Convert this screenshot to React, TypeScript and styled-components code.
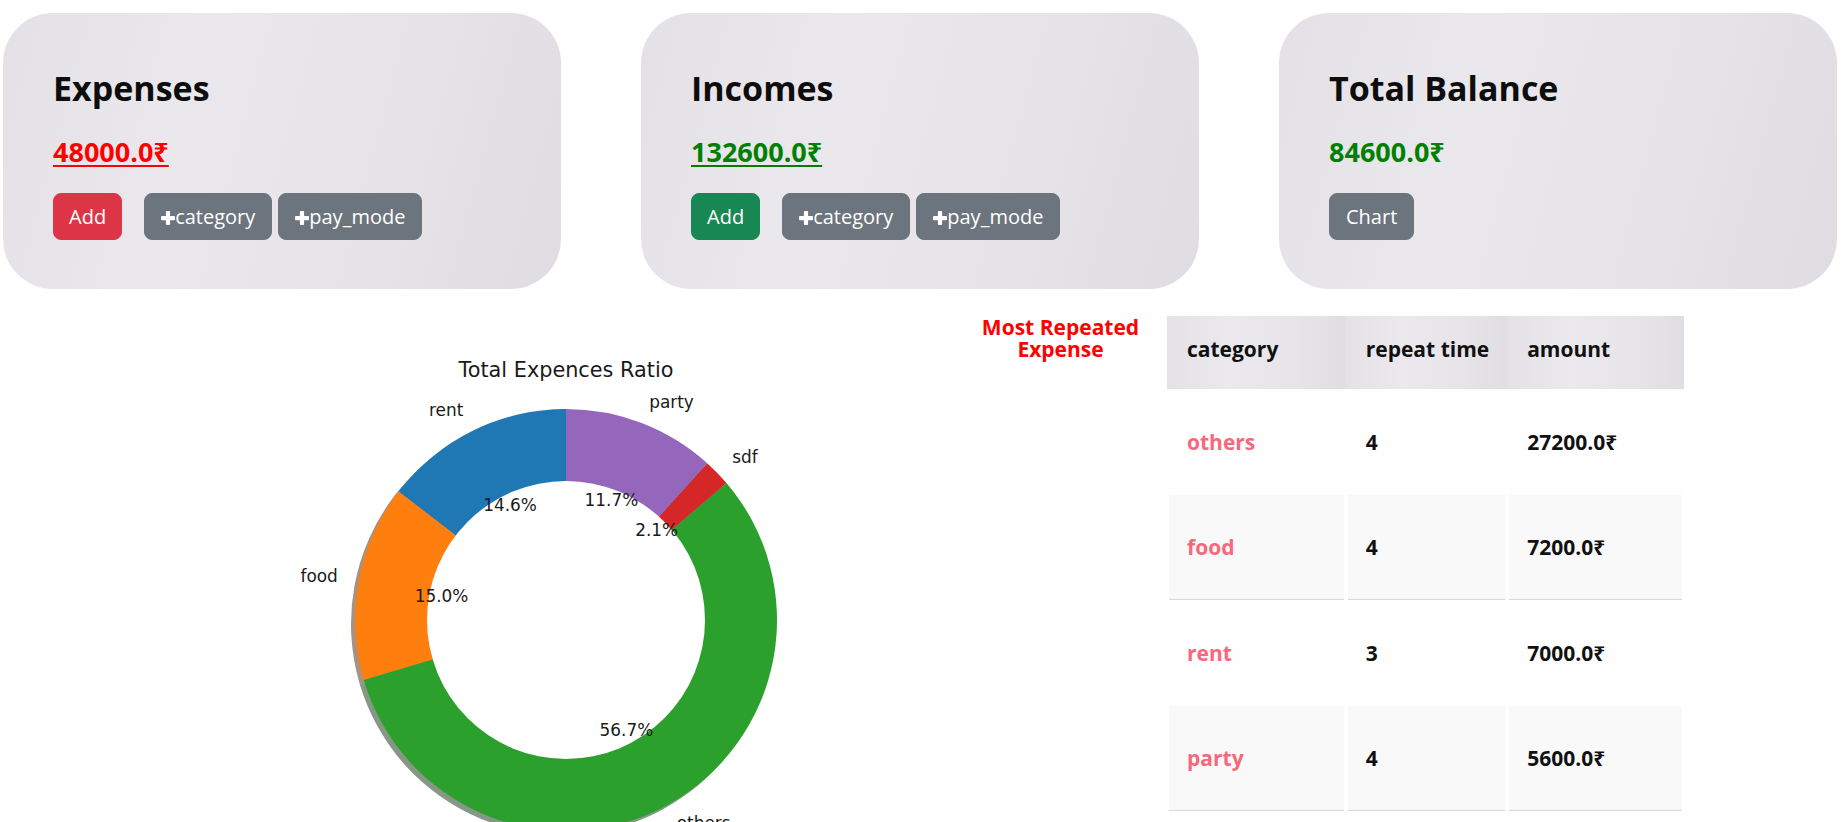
import React from 'react';
import styled, { createGlobalStyle } from 'styled-components';

const GlobalStyle = createGlobalStyle`
  html, body {
    margin: 0;
    padding: 0;
    background: #fff;
    overflow: hidden;
  }
  body {
    font-family: "Open Sans", "Noto Sans", sans-serif;
    color: #111;
  }
`;

const Page = styled.div`
  padding: 13px 0 0 3px;
`;

// top summary cards
const CardRow = styled.div`
  display: flex;
  gap: 80px;
`;

const Card = styled.section`
  width: 558px;
  box-sizing: border-box;
  padding: 55px 50px 49px;
  border-radius: 50px;
  background: linear-gradient(105deg, #e3e1e5 0%, #eae8ec 32%, #e6e4e8 65%, #dfdde1 100%);
`;

const CardTitle = styled.h2`
  margin: 0 0 27px;
  font-size: 34px;
  line-height: 41px;
  font-weight: 700;
  color: #0d0d0d;
`;

const Amount = styled.h4<{ $color: string; $underline?: boolean }>`
  margin: 0 0 25px;
  font-size: 27px;
  line-height: 32px;
  font-weight: 700;
  color: ${(p) => p.$color};
  text-decoration: ${(p) => (p.$underline ? 'underline' : 'none')};
  text-underline-offset: 3px;
`;

const ButtonRow = styled.div`
  display: flex;
  align-items: center;
  gap: 6px;
`;

const variants = {
  danger: '#dc3545',
  success: '#198754',
  secondary: '#6c757d',
};

const Button = styled.button<{ $variant: keyof typeof variants }>`
  display: inline-flex;
  align-items: center;
  box-sizing: border-box;
  height: 47px;
  padding: 0 16px;
  border: 1px solid ${(p) => variants[p.$variant]};
  border-radius: 8px;
  background: ${(p) => variants[p.$variant]};
  color: #fff;
  font-family: inherit;
  font-size: 20px;
  line-height: 30px;
  cursor: pointer;

  &.first {
    padding: 0 15px;
    margin-right: 16px;
  }
`;

const PlusMark = styled.svg`
  width: 14px;
  height: 14px;
  margin-top: 2px;
  flex-shrink: 0;
`;

const Plus = () => (
  <PlusMark viewBox="0 0 14 14">
    <rect x="0" y="5" width="14" height="4.2" rx="1" fill="#fff" />
    <rect x="4.9" y="0" width="4.2" height="14" rx="1" fill="#fff" />
  </PlusMark>
);

// lower part: chart, label, table
const BottomRow = styled.div`
  display: flex;
  align-items: flex-start;
  margin-top: 27px;
`;

const ChartBox = styled.div`
  width: 937px;
  height: 520px;
  flex-shrink: 0;
`;

const SideLabel = styled.div`
  width: 227px;
  box-sizing: border-box;
  padding-left: 14px;
  text-align: center;
  color: #ff0000;
  font-size: 21px;
  line-height: 22px;
  font-weight: 700;
`;

const Table = styled.table`
  border-collapse: separate;
  border-spacing: 0;
  width: 517px;
  font-size: 21px;
  font-weight: 700;
`;

const Th = styled.th<{ $w: number }>`
  width: ${(p) => p.$w}px;
  height: 73px;
  box-sizing: border-box;
  padding: 0 18px 8px 20px;
  text-align: left;
  white-space: nowrap;
  color: #111;
  background: linear-gradient(90deg, #e4e2e6 0%, #ebe9ed 35%, #e7e5e9 70%, #e0dee2 100%);
`;

const Row = styled.tr<{ $striped?: boolean }>`
  td {
    height: 105.5px;
    background: ${(p) => (p.$striped ? '#f9f9f9' : '#fefefe')};
    box-shadow: ${(p) => (p.$striped ? 'inset 0 -2px 1px -1px #d6d6d6' : 'none')};
  }
`;

const Td = styled.td<{ $pink?: boolean }>`
  box-sizing: border-box;
  padding: 0 18px;
  border-left: 2px solid #fff;
  border-right: 2px solid #fff;
  background-clip: padding-box;
  white-space: nowrap;
  color: ${(p) => (p.$pink ? '#f7687d' : '#111')};
`;

type Slice = { label: string; value: number; color: string; shadow: string };

const slices: Slice[] = [
  { label: 'rent', value: 7000, color: '#1f77b4', shadow: '#092336' },
  { label: 'food', value: 7200, color: '#ff7f0e', shadow: '#4d2604' },
  { label: 'others', value: 27200, color: '#2ca02c', shadow: '#0d300d' },
  { label: 'sdf', value: 1000, color: '#d62728', shadow: '#400c0c' },
  { label: 'party', value: 5600, color: '#9467bd', shadow: '#2c1f39' },
];

const CX = 566;
const CY = 620;
const R = 211;
const HOLE = 139;

const pt = (cx: number, cy: number, r: number, deg: number) => {
  const a = (deg * Math.PI) / 180;
  return [cx + r * Math.cos(a), cy - r * Math.sin(a)];
};

const wedge = (cx: number, cy: number, r: number, a1: number, a2: number) => {
  const [x1, y1] = pt(cx, cy, r, a1);
  const [x2, y2] = pt(cx, cy, r, a2);
  const large = a2 - a1 > 180 ? 1 : 0;
  return `M${cx},${cy} L${x1},${y1} A${r},${r} 0 ${large} 0 ${x2},${y2} Z`;
};

const DonutChart = () => {
  const total = slices.reduce((s, d) => s + d.value, 0);
  let start = 90;
  const parts = slices.map((d) => {
    const sweep = (d.value / total) * 360;
    const a1 = start;
    const a2 = start + sweep;
    start = a2;
    const mid = (a1 + a2) / 2;
    return { ...d, a1, a2, mid, pct: ((d.value / total) * 100).toFixed(1) + '%' };
  });

  return (
    <svg width="937" height="520" viewBox="3 316 937 520">
      <text
        x={CX}
        y={377}
        textAnchor="middle"
        fontFamily="'DejaVu Sans', sans-serif"
        fontSize="20.8"
        fill="#1a1a1a"
      >
        Total Expences Ratio
      </text>
      {parts.map((p) => (
        <path
          key={'s' + p.label}
          d={wedge(CX - 4, CY + 4, R, p.a1, p.a2)}
          fill={p.shadow}
          opacity={0.5}
        />
      ))}
      {parts.map((p) => (
        <path key={p.label} d={wedge(CX, CY, R, p.a1, p.a2)} fill={p.color} />
      ))}
      <circle cx={CX} cy={CY} r={HOLE} fill="#fff" />
      {parts.map((p) => {
        const [lx, ly] = pt(CX, CY, R * 1.1, p.mid);
        const [px, py] = pt(CX, CY, R * 0.6, p.mid);
        const right = Math.cos((p.mid * Math.PI) / 180) < 0;
        return (
          <g key={'t' + p.label} fontFamily="'DejaVu Sans', sans-serif" fontSize="16.9" fill="#1a1a1a">
            <text x={lx} y={ly + 4.6} textAnchor={right ? 'end' : 'start'}>
              {p.label}
            </text>
            <text x={px} y={py + 4.6} textAnchor="middle">
              {p.pct}
            </text>
          </g>
        );
      })}
    </svg>
  );
};

const rows = [
  { category: 'others', times: 4, amount: '27200.0₹' },
  { category: 'food', times: 4, amount: '7200.0₹' },
  { category: 'rent', times: 3, amount: '7000.0₹' },
  { category: 'party', times: 4, amount: '5600.0₹' },
];

const App: React.FC = () => {
  return (
    <Page>
      <GlobalStyle />
      <CardRow>
        <Card>
          <CardTitle>Expenses</CardTitle>
          <Amount $color="#ff0000" $underline>
            48000.0₹
          </Amount>
          <ButtonRow>
            <Button $variant="danger" className="first">Add</Button>
            <Button $variant="secondary">
              <Plus />
              category
            </Button>
            <Button $variant="secondary">
              <Plus />
              pay_mode
            </Button>
          </ButtonRow>
        </Card>
        <Card>
          <CardTitle>Incomes</CardTitle>
          <Amount $color="#008000" $underline>
            132600.0₹
          </Amount>
          <ButtonRow>
            <Button $variant="success" className="first">Add</Button>
            <Button $variant="secondary">
              <Plus />
              category
            </Button>
            <Button $variant="secondary">
              <Plus />
              pay_mode
            </Button>
          </ButtonRow>
        </Card>
        <Card>
          <CardTitle>Total Balance</CardTitle>
          <Amount $color="#008000">84600.0₹</Amount>
          <ButtonRow>
            <Button $variant="secondary">Chart</Button>
          </ButtonRow>
        </Card>
      </CardRow>

      <BottomRow>
        <ChartBox>
          <DonutChart />
        </ChartBox>
        <SideLabel>
          Most Repeated
          <br />
          Expense
        </SideLabel>
        <Table>
          <thead>
            <tr>
              <Th $w={180}>category</Th>
              <Th $w={159}>repeat time</Th>
              <Th $w={178}>amount</Th>
            </tr>
          </thead>
          <tbody>
            {rows.map((r, i) => (
              <Row key={r.category} $striped={i % 2 === 1}>
                <Td $pink>{r.category}</Td>
                <Td>{r.times}</Td>
                <Td>{r.amount}</Td>
              </Row>
            ))}
          </tbody>
        </Table>
      </BottomRow>
    </Page>
  );
};

export default App;
